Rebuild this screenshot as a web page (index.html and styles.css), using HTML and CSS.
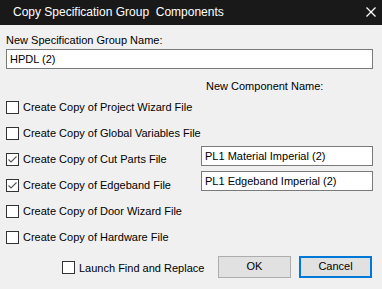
FILE: index.html
```html
<!DOCTYPE html>
<html>
<head>
<meta charset="utf-8">
<link rel="stylesheet" href="styles.css">
</head>
<body>
<div class="dialog">
  <div class="titlebar">
    <span class="title">Copy Specification Group  Components</span>
    <svg class="close" width="10" height="10" viewBox="0 0 10 10"><path d="M0.5 0.5 L9.5 9.5 M9.5 0.5 L0.5 9.5" stroke="#ffffff" stroke-width="1.3"/></svg>
  </div>
  <div class="content">
    <div class="label">New Specification Group Name:</div>
    <div class="textbox wide">HPDL (2)</div>
    <div class="comp-label">New Component Name:</div>
    <div class="rows">
      <div class="row"><span class="cb"></span><span class="txt">Create Copy of Project Wizard File</span></div>
      <div class="row"><span class="cb"></span><span class="txt">Create Copy of Global Variables File</span></div>
      <div class="row"><span class="cb checked"><svg width="11" height="11" viewBox="0 0 11 11"><path d="M1.5 5.5 L4 8 L9.5 2.5" fill="none" stroke="#555" stroke-width="1.1"/></svg></span><span class="txt">Create Copy of Cut Parts File</span><div class="textbox side">PL1 Material Imperial (2)</div></div>
      <div class="row"><span class="cb checked"><svg width="11" height="11" viewBox="0 0 11 11"><path d="M1.5 5.5 L4 8 L9.5 2.5" fill="none" stroke="#555" stroke-width="1.1"/></svg></span><span class="txt">Create Copy of Edgeband File</span><div class="textbox side second">PL1 Edgeband Imperial (2)</div></div>
      <div class="row"><span class="cb"></span><span class="txt">Create Copy of Door Wizard File</span></div>
      <div class="row"><span class="cb"></span><span class="txt">Create Copy of Hardware File</span></div>
    </div>
    <div class="footer">
      <span class="cb"></span><span class="txt launch">Launch Find and Replace</span>
      <button class="btn ok">OK</button>
      <button class="btn cancel">Cancel</button>
    </div>
  </div>
</div>
</body>
</html>
```
FILE: styles.css
```css
html, body {
  margin: 0;
  padding: 0;
  background: #f0f0f0;
}
.dialog {
  width: 382px;
  height: 289px;
  background: #f0f0f0;
  font-family: "Liberation Sans", Arial, sans-serif;
  font-size: 11px;
  color: #000;
  overflow: hidden;
}
.titlebar {
  height: 25px;
  background: #191919;
  display: flex;
  align-items: center;
  justify-content: space-between;
  padding: 0 6px 0 13px;
}
.title {
  color: #ffffff;
  font-family: "Liberation Sans", Arial, sans-serif;
  font-size: 12px;
  white-space: pre;
  padding-bottom: 1px;
}
.close {
  margin-top: -1px;
}
.content {
  padding: 9px 9px 0 6px;
}
.label {
  line-height: 13px;
}
.textbox {
  box-sizing: border-box;
  height: 20px;
  border: 1px solid #7a7a7a;
  background: #fff;
  line-height: 18px;
  padding-left: 3px;
  white-space: nowrap;
}
.wide {
  margin-top: 2px;
  width: 367px;
}
.comp-label {
  margin-top: 11px;
  margin-left: 200px;
  line-height: 13px;
}
.rows {
  margin-top: 1px;
  display: flex;
  flex-direction: column;
}
.row {
  height: 26px;
  display: flex;
  align-items: center;
}
.cb {
  box-sizing: border-box;
  width: 13px;
  height: 13px;
  border: 1px solid #333;
  background: #fff;
  flex: none;
  display: flex;
  align-items: center;
  justify-content: center;
}
.txt {
  margin-left: 4px;
  white-space: nowrap;
}
.side {
  margin-left: auto;
  width: 172px;
  margin-bottom: 6px;
}
.side.second {
  margin-bottom: 8px;
}
.footer {
  display: flex;
  align-items: center;
  margin-top: 6px;
  padding-left: 56px;
  padding-right: 1px;
}
.launch {
  margin-top: 2px;
}
.btn {
  box-sizing: border-box;
  height: 22px;
  width: 73px;
  font-family: "Liberation Sans", Arial, sans-serif;
  font-size: 11px;
  background: #e1e1e1;
  border: 1px solid #adadad;
  padding: 0 0 2px 0;
  margin: 0;
}
.ok {
  margin-left: auto;
}
.cancel {
  margin-left: 8px;
  border: 2px solid #0078d7;
}
```
